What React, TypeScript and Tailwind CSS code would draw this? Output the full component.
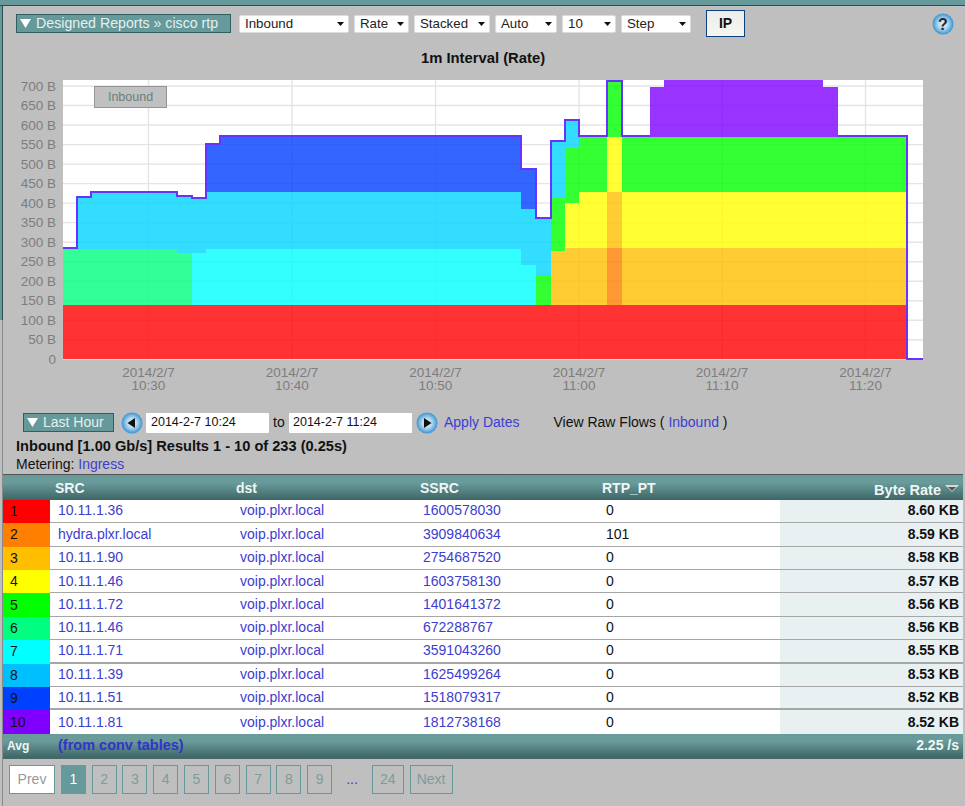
import React from 'react';

// stacked bands of the chart: x1, x2, top, bottom, colour
const bands: [number, number, number, number, string][] = [
  [63, 907, 305, 359, '#ff0000'],
  [63, 177, 249, 305, '#00ff80'],
  [177, 192, 253, 305, '#00ff80'],
  [192, 206, 253, 305, '#00ffff'],
  [206, 521, 249, 305, '#00ffff'],
  [521, 536, 265, 305, '#00ffff'],
  [536, 551, 275, 305, '#00ff00'],
  [551, 565, 251, 305, '#ffbf00'],
  [565, 607, 248, 305, '#ffbf00'],
  [622, 907, 248, 305, '#ffbf00'],
  [607, 622, 192, 248, '#ffbf00'],
  [607, 622, 248, 305, '#ff8000'],
  [565, 579, 203, 248, '#ffff00'],
  [579, 607, 192, 248, '#ffff00'],
  [622, 907, 192, 248, '#ffff00'],
  [607, 622, 137, 192, '#ffff00'],
  [551, 565, 198, 251, '#00ff00'],
  [565, 579, 148, 203, '#00ff00'],
  [579, 607, 137, 192, '#00ff00'],
  [622, 907, 137, 192, '#00ff00'],
  [607, 622, 81, 137, '#00ff00'],
  [77, 91, 197, 249, '#00d4ff'],
  [91, 177, 192, 249, '#00d4ff'],
  [177, 192, 196, 253, '#00d4ff'],
  [192, 206, 198, 253, '#00d4ff'],
  [206, 521, 192, 249, '#00d4ff'],
  [521, 536, 209, 265, '#00d4ff'],
  [536, 551, 218, 275, '#00d4ff'],
  [551, 565, 141, 198, '#00d4ff'],
  [565, 579, 120, 148, '#00d4ff'],
  [206, 220, 144, 192, '#0040ff'],
  [220, 521, 136, 192, '#0040ff'],
  [521, 536, 169, 209, '#0040ff'],
  [650, 664, 87, 137, '#8000ff'],
  [664, 823, 80, 137, '#8000ff'],
  [823, 838, 87, 137, '#8000ff'],
];

// top line of the stack, it disappears into the purple block
const outlineLeft =
  '63,248 77,248 77,197 91,197 91,192 177,192 177,196 192,196 192,198 206,198 206,144 220,144 220,136 521,136 521,169 536,169 536,218 551,218 551,141 565,141 565,120 579,120 579,136 607,136 607,81 622,81 622,136 650,136';
const outlineRight = '838,136 907,136 907,359 923,359';

const ticks = [
  [148.5, '10:30'],
  [292, '10:40'],
  [435.5, '10:50'],
  [579, '11:00'],
  [722, '11:10'],
  [865.5, '11:20'],
] as const;

const rows = [
  { color: 'bg-[#ff0000]', src: '10.11.1.36', ssrc: '1600578030', pt: '0', rate: '8.60 KB', line: 'border-b' },
  { color: 'bg-[#ff8000]', src: 'hydra.plxr.local', ssrc: '3909840634', pt: '101', rate: '8.59 KB', line: 'border-b' },
  { color: 'bg-[#ffbf00]', src: '10.11.1.90', ssrc: '2754687520', pt: '0', rate: '8.58 KB', line: 'border-b' },
  { color: 'bg-[#ffff00]', src: '10.11.1.46', ssrc: '1603758130', pt: '0', rate: '8.57 KB', line: 'border-b' },
  { color: 'bg-[#00ff00]', src: '10.11.1.72', ssrc: '1401641372', pt: '0', rate: '8.56 KB', line: 'border-b' },
  { color: 'bg-[#00ff80]', src: '10.11.1.46', ssrc: '672288767', pt: '0', rate: '8.56 KB', line: 'border-b' },
  { color: 'bg-[#00ffff]', src: '10.11.1.71', ssrc: '3591043260', pt: '0', rate: '8.55 KB', line: 'border-b-2' },
  { color: 'bg-[#00bfff]', src: '10.11.1.39', ssrc: '1625499264', pt: '0', rate: '8.53 KB', line: 'border-b' },
  { color: 'bg-[#0040ff]', src: '10.11.1.51', ssrc: '1518079317', pt: '0', rate: '8.52 KB', line: 'border-b-2' },
  { color: 'bg-[#8000ff]', src: '10.11.1.81', ssrc: '1812738168', pt: '0', rate: '8.52 KB', line: '' },
];

const pages = ['2', '3', '4', '5', '6', '7', '8', '9'];

function Caret() {
  return (
    <svg width="7" height="4" viewBox="0 0 7 4" className="shrink-0">
      <polygon points="0,0 7,0 3.5,4" fill="#111" />
    </svg>
  );
}

function Picker({ label, width }: { label: string; width: string }) {
  return (
    <div className={`${width} h-[18px] mt-[1px] flex items-center justify-between bg-white border border-[#dcdcdc] rounded-[2px] pl-[5px] pr-[4px] text-[13.3px] text-[#222]`}>
      <span>{label}</span>
      <Caret />
    </div>
  );
}

function Disclosure({ label, width, size }: { label: string; width: string; size: string }) {
  return (
    <div className={`${width} ${size} h-[19px] flex items-center gap-[5px] pl-[3px] bg-[#669999] border border-[#2f5f5f] text-[#e3f1f1] whitespace-nowrap`}>
      <svg width="11" height="9" viewBox="0 0 11 9" className="shrink-0">
        <polygon points="0,0 11,0 5.5,9" fill="#ffffff" />
      </svg>
      <span>{label}</span>
    </div>
  );
}

function GlossyButton({ id, children }: { id: string; children: React.ReactNode }) {
  return (
    <svg width="22" height="22" viewBox="0 0 22 22" className="block shrink-0">
      <defs>
        <radialGradient id={id} cx="50%" cy="50%" r="52%">
          <stop offset="0%" stopColor="#e8f4fb" />
          <stop offset="45%" stopColor="#b5d9ee" />
          <stop offset="100%" stopColor="#2f8fd0" />
        </radialGradient>
      </defs>
      <circle cx="11" cy="11" r="10.5" fill={`url(#${id})`} />
      {children}
    </svg>
  );
}

function Chart() {
  return (
    <svg width="962" height="330" viewBox="3 70 962 330" className="block mt-[4px] shrink-0">
      <rect x="63" y="80" width="860" height="279.5" fill="#ffffff" />
      {Array.from({ length: 14 }, (_, i) => (
        <line key={i} x1="63" x2="923" y1={359.3 - 19.52 * (i + 1)} y2={359.3 - 19.52 * (i + 1)} stroke="#e4e4e4" strokeWidth="1.4" />
      ))}
      {ticks.map(([x]) => (
        <line key={x} x1={x} x2={x} y1="80" y2="359" stroke="#e4e4e4" strokeWidth="1.4" />
      ))}
      {bands.map(([x1, x2, top, bottom, color], i) => (
        <rect key={i} x={x1} y={top} width={x2 - x1} height={bottom - top} fill={color} fillOpacity="0.8" />
      ))}
      <polyline points={outlineLeft} fill="none" stroke="#6633ff" strokeWidth="2" />
      <polyline points={outlineRight} fill="none" stroke="#6633ff" strokeWidth="2" />
      {Array.from({ length: 15 }, (_, i) => (
        <text key={i} x="56" y={359.3 - 19.52 * i + 4.5} textAnchor="end" fontSize="13.5" fill="#7d7d7d">
          {i === 0 ? '0' : `${i * 50} B`}
        </text>
      ))}
      {ticks.map(([x, time]) => (
        <text key={time} fontSize="13.5" fill="#7d7d7d" textAnchor="middle">
          <tspan x={x} y="377">2014/2/7</tspan>
          <tspan x={x} y="390">{time}</tspan>
        </text>
      ))}
      <rect x="94.5" y="86.5" width="72" height="21" fill="#c0c0c0" stroke="#949494" />
      <text x="130.5" y="101" textAnchor="middle" fontSize="12.5" fill="#6b7f7f">Inbound</text>
    </svg>
  );
}

const rowGrid = 'grid grid-cols-[47px_190px_183px_183px_174px_183px]';

export default function App() {
  return (
    <div className="w-[965px] h-[806px] overflow-hidden flex flex-col bg-[#bfbfbf] font-['Liberation_Sans',Arial,sans-serif] text-[14px] text-[#111]">
      <div className="h-[6px] shrink-0 bg-[#669999] border-b border-[#2f4f4f]" />
      <div className="flex flex-1 min-h-0">
        <div className="w-[3px] shrink-0 flex flex-col">
          <div className="h-[314px] bg-[#669999] border-r border-[#2f4f4f]" />
          <div className="flex-1 border-r border-[#8a8a8a]" />
        </div>

        <div className="w-[960px] flex flex-col">
          {/* toolbar */}
          <div className="h-[27px] mt-[4px] flex items-center shrink-0 pl-[13px]">
            <Disclosure label="Designed Reports » cisco rtp" width="w-[215px]" size="text-[14.2px]" />
            <div className="flex items-center gap-[5px] ml-[8px]">
              <Picker label="Inbound" width="w-[110px]" />
              <Picker label="Rate" width="w-[55px]" />
              <Picker label="Stacked" width="w-[76px]" />
              <Picker label="Auto" width="w-[62px]" />
              <Picker label="10" width="w-[54px]" />
              <Picker label="Step" width="w-[70px]" />
            </div>
            <button className="ml-[15px] w-[39px] h-[27px] bg-linear-to-b from-[#ececec] to-[#f6f6f0] border border-[#0b3f80] font-bold text-[14px] text-[#111]">
              IP
            </button>
            <div className="ml-[187px]">
              <GlossyButton id="help">
                <text x="11" y="16.5" textAnchor="middle" fontSize="16" fontWeight="700" fill="#1c2a33">?</text>
              </GlossyButton>
            </div>
          </div>

          <div className="mt-[13px] h-[16px] leading-[16px] shrink-0 text-center font-bold text-[14.8px]">1m Interval (Rate)</div>

          <Chart />

          {/* date range */}
          <div className="mt-[11px] h-[23px] shrink-0 flex items-center pl-[20px]">
            <Disclosure label="Last Hour" width="w-[91px]" size="text-[14px]" />
            <div className="ml-[7px]">
              <GlossyButton id="prev">
                <polygon points="6.5,11 14,6 14,16" fill="#111" />
              </GlossyButton>
            </div>
            <div className="ml-[3px] w-[123px] h-[20px] bg-white flex items-center pl-[5px] text-[12.5px] text-[#111] rounded-[1px]">2014-2-7 10:24</div>
            <span className="ml-[4px] w-[16px]">to</span>
            <div className="w-[123px] h-[20px] bg-white flex items-center pl-[4px] text-[12.5px] text-[#111] rounded-[1px]">2014-2-7 11:24</div>
            <div className="ml-[4px]">
              <GlossyButton id="next">
                <polygon points="15.5,11 8,6 8,16" fill="#111" />
              </GlossyButton>
            </div>
            <a className="ml-[6px] text-[#3d3dd0]">Apply Dates</a>
            <span className="ml-[34px]">
              View Raw Flows ( <a className="text-[#3d3dd0]">Inbound</a> )
            </span>
          </div>

          <div className="mt-[4px] ml-[13px] h-[16px] leading-[16px] font-bold text-[14.6px] whitespace-nowrap shrink-0">
            Inbound [1.00 Gb/s] Results 1 - 10 of 233 (0.25s)
          </div>
          <div className="mt-[2px] ml-[13px] h-[16px] leading-[16px] shrink-0">
            Metering: <a className="text-[#3d3dd0]">Ingress</a>
          </div>

          {/* flows table */}
          <div className="mt-[1.8px] border-t border-[#555] shrink-0">
            <div className={`${rowGrid} h-[25px] pb-[3px] items-center bg-linear-to-b from-[#6a9b9b] from-30% to-[#3e6666] font-bold text-[#eef6f6]`}>
              <div />
              <div className="pl-[5px]">SRC</div>
              <div className="-ml-[4px]">dst</div>
              <div className="-ml-[3px]">SSRC</div>
              <div className="-ml-[4px]">RTP_PT</div>
              <div className="flex items-center justify-end gap-[4px] pr-[4px] pt-[5px] text-[14.5px]">
                <span>Byte Rate</span>
                <svg width="14" height="7" viewBox="0 0 14 7" className="-mt-[5px]">
                  <polygon points="0,0 14,0 7,7" fill="#d8d8d8" />
                  <polygon points="3,2 11,2 7,6" fill="#555555" />
                </svg>
              </div>
            </div>
            {rows.map((r, i) => (
              <div key={i} className={`${rowGrid} h-[23.4px] bg-white`}>
                <div className={`${r.color} pl-[7px] flex items-center text-[#111]`}>{i + 1}</div>
                <div className={`${r.line} border-[#a6a6a6] pl-[8px] flex items-center text-[#3d3dd0]`}>{r.src}</div>
                <div className={`${r.line} border-[#a6a6a6] flex items-center text-[#3d3dd0]`}>voip.plxr.local</div>
                <div className={`${r.line} border-[#a6a6a6] flex items-center text-[#3d3dd0]`}>{r.ssrc}</div>
                <div className={`${r.line} border-[#a6a6a6] flex items-center`}>{r.pt}</div>
                <div className={`${r.line} border-[#a6a6a6] bg-[#e8f0f2] flex items-center justify-end pr-[4px] font-bold`}>{r.rate}</div>
              </div>
            ))}
            <div className="h-[25px] flex items-center bg-linear-to-b from-[#6a9b9b] from-30% to-[#3e6666] border-b border-[#4a6a6a] font-bold">
              <span className="ml-[4px] w-[51px] text-[12px] text-[#eef6f6]">Avg</span>
              <a className="text-[14.5px] text-[#3333cc]">(from conv tables)</a>
              <span className="ml-auto mr-[4px] text-[14px] text-[#eef6f6]">2.25 /s</span>
            </div>
          </div>

          {/* pagination */}
          <div className="mt-[6px] ml-[6px] h-[29px] shrink-0 flex items-stretch gap-[5.8px] text-[14px] text-[#7c9c9c]">
            <div className="w-[46px] bg-white border border-[#669999] flex items-center justify-center text-[#999]">Prev</div>
            <div className="w-[25px] bg-[#669999] text-white flex items-center justify-center">1</div>
            {pages.map((p) => (
              <div key={p} className="w-[25px] border border-[#669999] flex items-center justify-center">
                {p}
              </div>
            ))}
            <div className="w-[28px] flex items-center justify-center text-[#3d3dd0]">...</div>
            <div className="w-[32px] border border-[#669999] flex items-center justify-center">24</div>
            <div className="w-[43px] border border-[#669999] flex items-center justify-center">Next</div>
          </div>
        </div>
      </div>
    </div>
  );
}
